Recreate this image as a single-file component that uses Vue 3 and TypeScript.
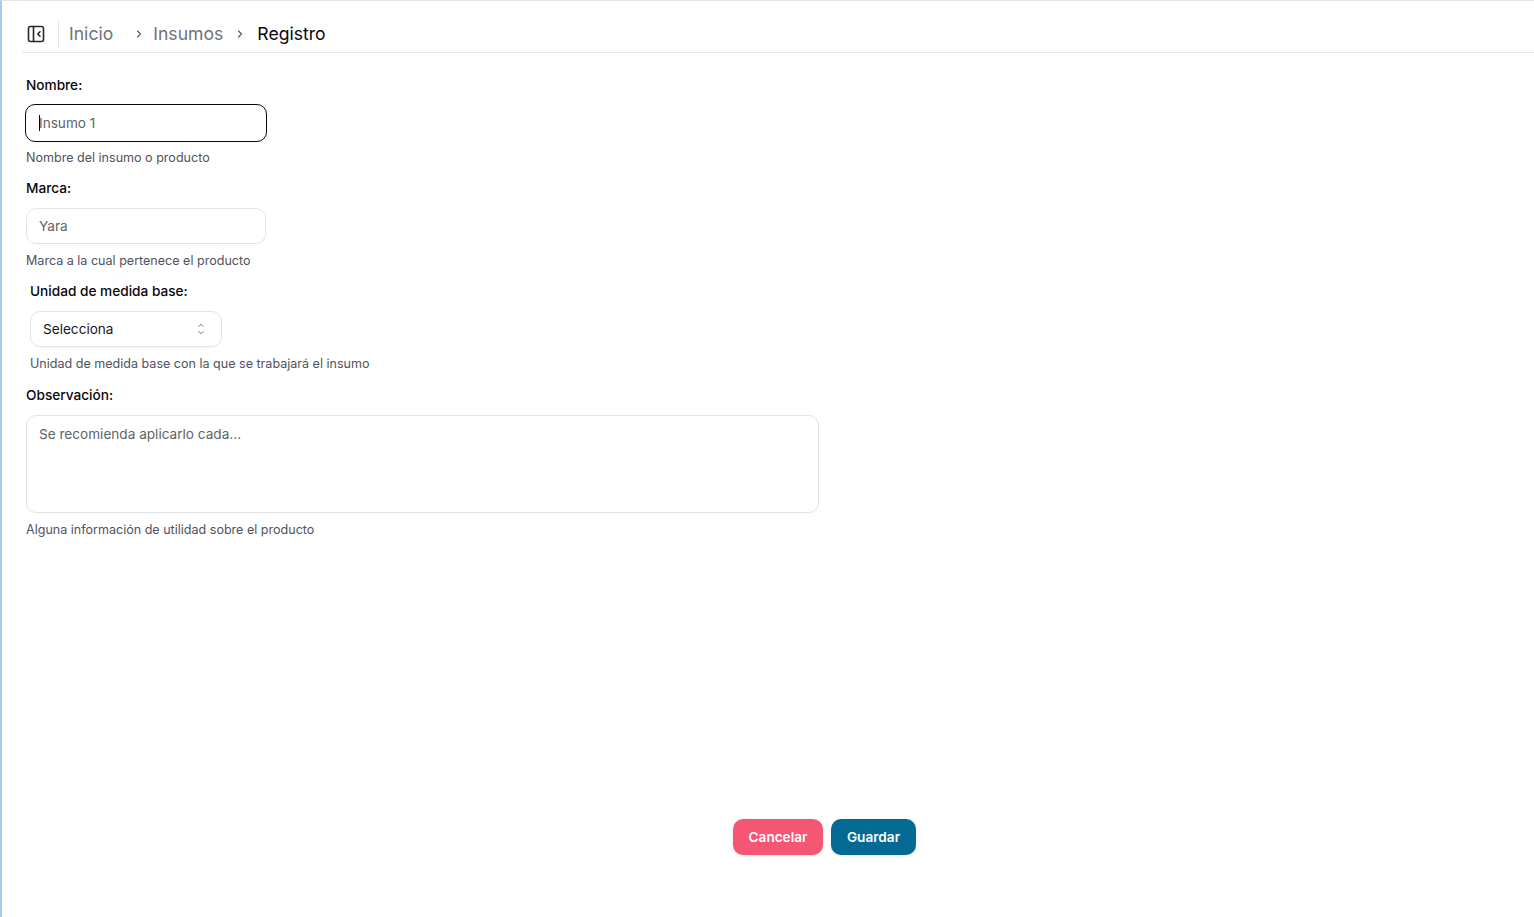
<script setup lang="ts">
interface Crumb { label: string; current?: boolean }
const crumbs: Crumb[] = [{ label: 'Insumos' }, { label: 'Registro', current: true }]
</script>

<template>
  <div class="page">
    <header class="topbar">
      <svg class="panel-icon" width="20" height="20" viewBox="0 0 20 20" fill="none" stroke="currentColor" stroke-width="1.6" stroke-linecap="round" stroke-linejoin="round">
        <rect x="2.5" y="2.5" width="15" height="15" rx="2" />
        <path d="M7.5 2.5v15" />
        <path d="M14 7.8 11.8 10l2.2 2.2" />
      </svg>
      <span class="divider"></span>
      <nav class="crumbs">
        <span class="crumb first">Inicio</span>
        <template v-for="c in crumbs" :key="c.label">
          <svg class="chev" width="14" height="14" viewBox="0 0 14 14" fill="none" stroke="currentColor" stroke-width="1.1" stroke-linecap="round" stroke-linejoin="round"><path d="M5.5 4 8.5 7l-3 3" /></svg>
          <span class="crumb" :class="{ current: c.current }">{{ c.label }}</span>
        </template>
      </nav>
    </header>

    <main class="content">
      <form class="form" @submit.prevent>
        <div class="field">
          <label class="label">Nombre:</label>
          <div class="control focused" role="textbox"><span class="caret"></span>Insumo 1</div>
          <p class="help">Nombre del insumo o producto</p>
        </div>
        <div class="field">
          <label class="label">Marca:</label>
          <div class="control" role="textbox">Yara</div>
          <p class="help">Marca a la cual pertenece el producto</p>
        </div>
        <div class="field indented">
          <label class="label">Unidad de medida base:</label>
          <div class="control select" role="combobox">
            <span>Selecciona</span>
            <svg width="12" height="12" viewBox="0 0 12 12" fill="none" stroke="#71717a" stroke-width="1" stroke-linecap="round" stroke-linejoin="round"><path d="M3.8 3.4 6 1.2l2.2 2.2" /><path d="M3.8 8.6 6 10.8l2.2-2.2" /></svg>
          </div>
          <p class="help">Unidad de medida base con la que se trabajará el insumo</p>
        </div>
        <div class="field">
          <label class="label">Observación:</label>
          <div class="control area" role="textbox">Se recomienda aplicarlo cada...</div>
          <p class="help">Alguna información de utilidad sobre el producto</p>
        </div>
      </form>

      <div class="actions">
        <button type="button" class="btn cancel">Cancelar</button>
        <button type="button" class="btn save">Guardar</button>
      </div>
    </main>
  </div>
</template>

<style>
html, body { margin: 0; background: #fff; }
</style>

<style scoped>
.page {
  box-sizing: border-box;
  height: 917px;
  display: flex;
  flex-direction: column;
  border-top: 1px solid #e2e4e8;
  border-left: 2px solid #a9cbe8;
  background: #fff;
  font-family: Inter, "Liberation Sans", sans-serif;
  color: #09090b;
}
.topbar {
  box-sizing: border-box;
  height: 52px;
  margin-left: 20px;
  padding: 18px 0 4px 4px;
  display: flex;
  align-items: center;
  border-bottom: 1px solid #e5e7eb;
}
.panel-icon { color: #27272a; flex: none; }
.divider { width: 1px; height: 28px; background: #e5e7eb; margin: 0 10px 0 12px; }
.crumbs { display: flex; align-items: center; font-size: 17.6px; }
.crumb { color: #71717a; }
.crumb.first { margin-right: 19px; }
.crumb.current { color: #09090b; margin-left: 3px; }
.chev { color: #52525b; margin-right: 7px; }
.crumb + .chev { margin-left: 10px; }
.crumb.first + .chev { margin-left: 0; }
.content {
  flex: 1;
  display: flex;
  flex-direction: column;
  padding-left: 24px;
}
.form {
  display: flex;
  flex-direction: column;
  padding-top: 24px;
  gap: 14px;
}
.field { display: flex; flex-direction: column; }
.field.indented { padding-left: 4px; margin-bottom: 1px; }
.label { font-size: 13.65px; font-weight: 500; line-height: 17px; }
.control {
  position: relative;
  box-sizing: border-box;
  width: 240px;
  height: 36px;
  margin-top: 11px;
  padding: 0 12px;
  display: flex;
  align-items: center;
  border: 1px solid #e4e4e7;
  border-radius: 10px;
  font-size: 13.6px;
  color: #5f6368;
  box-shadow: 0 1px 2px rgba(0, 0, 0, 0.03);
}
.focused { border-color: #09090b; width: 242px; height: 38px; margin: 10px 0 -1px -1px; padding-left: 13px; }
.caret { position: absolute; left: 13px; top: 10px; width: 1px; height: 16px; background: #000; }
.select { width: 192px; justify-content: space-between; color: #18181b; padding-right: 14px; }
.area { width: 793px; height: 98px; align-items: flex-start; padding-top: 10px; }
.help { margin: 9px 0 0; font-size: 12.55px; line-height: 16px; color: #52525b; }
.actions {
  display: flex;
  gap: 8px;
  margin-top: auto;
  margin-bottom: 62px;
  margin-left: 707px;
}
.btn {
  height: 36px;
  border: 0;
  border-radius: 10px;
  font-family: inherit;
  font-size: 13.6px;
  font-weight: 600;
  color: #fff;
  box-shadow: 0 1px 3px rgba(0, 0, 0, 0.1);
}
.cancel { width: 90px; background: #f55673; }
.save { width: 85px; background: #046a93; }
</style>
